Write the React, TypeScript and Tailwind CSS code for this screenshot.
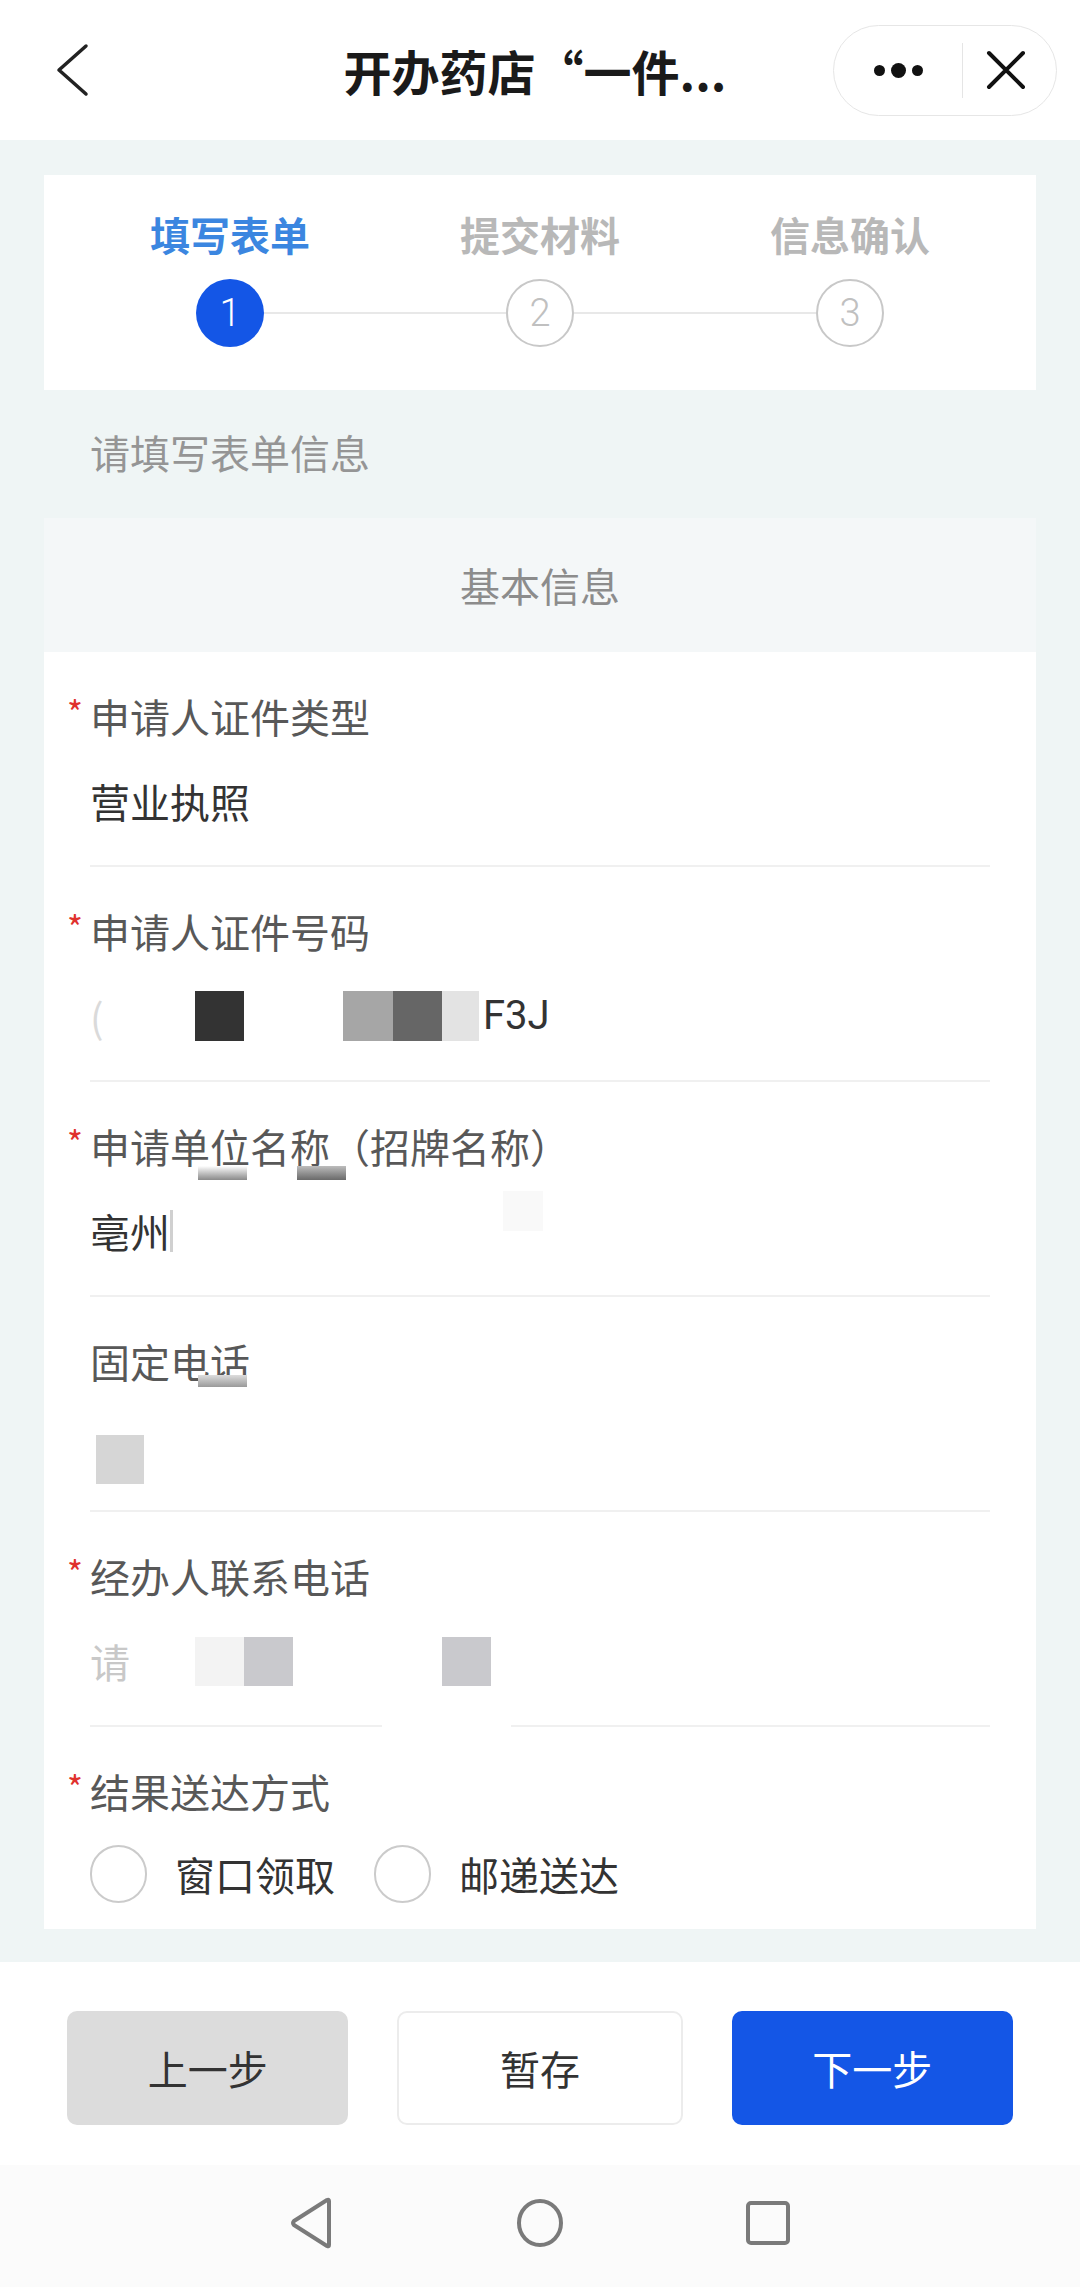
import type { ReactNode } from "react";

const Label = ({ required, text }: { required?: boolean; text: string }) => (
  <div className="pt-[40px] flex items-center h-[88px] text-[40px] leading-[48px] text-[#585858]">
    {required && (
      <span className="-ml-[23px] w-[23px] text-[#e0312d] text-[34px] leading-[34px] -mt-[8px]">*</span>
    )}
    <span>{text}</span>
  </div>
);

const Field = ({
  required,
  label,
  children,
  gap,
  divider = "full",
}: {
  required?: boolean;
  label: string;
  children: ReactNode;
  gap?: ReactNode;
  divider?: "full" | "split";
}) => (
  <div className="flex flex-col">
    <Label required={required} text={label} />
    <div className="h-[37px]">{gap}</div>
    <div className="flex items-center h-[48px] text-[40px] leading-[48px] text-[#333333]">{children}</div>
    <div className="h-[40px]" />
    {divider === "full" && <div className="h-[2px] bg-[#f0f0f0]" />}
    {divider === "split" && (
      <div className="flex h-[2px]">
        <div className="w-[292px] bg-[#f0f0f0]" />
        <div className="w-[129px]" />
        <div className="flex-1 bg-[#f0f0f0]" />
      </div>
    )}
  </div>
);

const Step = ({ n, label, active, first, last }: { n: number; label: string; active?: boolean; first?: boolean; last?: boolean }) => (
  <div className="flex flex-col items-center">
    <div className={`h-[48px] text-[40px] leading-[48px] font-semibold ${active ? "text-[#3b86e0]" : "text-[#b8b8b8]"}`}>{label}</div>
    <div className="mt-[21px] flex items-center w-full">
      <div className={`flex-1 h-[2px] ${first ? "" : "bg-[#e8e8e8]"}`} />
      <div
        className={`w-[68px] h-[68px] rounded-full flex items-center justify-center font-['Roboto',sans-serif] font-light text-[38px] ${
          active ? "bg-[#1456e6] text-white" : "border-2 border-[#c8c8c8] text-[#c0c0c0]"
        }`}
      >
        {n}
      </div>
      <div className={`flex-1 h-[2px] ${last ? "" : "bg-[#e8e8e8]"}`} />
    </div>
  </div>
);

const Radio = ({ label }: { label: string }) => (
  <div className="flex items-center">
    <div className="w-[57px] h-[58px] rounded-full border-2 border-[#cbcbcb]" />
    <span className="ml-[28px] text-[40px] leading-[48px] text-[#333333]">{label}</span>
  </div>
);

export default function App() {
  return (
    <div className="w-[1080px] min-h-[2287px] bg-[#eff5f5] flex flex-col font-['Noto_Sans_CJK_SC','Noto_Sans',sans-serif]">
      {/* 顶部导航 */}
      <div className="h-[140px] bg-white grid grid-cols-[1fr_auto_1fr] items-center">
        <div className="pl-[52px] flex items-center">
          <svg width="40" height="56" viewBox="0 0 40 56" fill="none">
            <path d="M34 4 L7 28 L34 52" stroke="#222" strokeWidth="3.5" strokeLinecap="round" strokeLinejoin="round" />
          </svg>
        </div>
        <div className="text-[48px] leading-[56px] font-bold text-[#1a1a1a] -ml-[10px]">开办药店“一件...</div>
        <div className="flex justify-end pr-[23px]">
          <div className="w-[224px] h-[91px] rounded-full border border-[#e6e6e6] flex items-center">
            <div className="w-[128px] flex items-center justify-center gap-[6px]">
              <span className="w-[11px] h-[11px] rounded-full bg-[#111]" />
              <span className="w-[15px] h-[15px] rounded-full bg-[#111]" />
              <span className="w-[11px] h-[11px] rounded-full bg-[#111]" />
            </div>
            <div className="w-px h-[55px] bg-[#e5e5e5]" />
            <div className="flex-1 flex items-center justify-center pr-[8px]">
              <svg width="42" height="40" viewBox="0 0 42 40" fill="none">
                <path d="M4 3 L38 37 M38 3 L4 37" stroke="#111" strokeWidth="4" strokeLinecap="round" />
              </svg>
            </div>
          </div>
        </div>
      </div>

      {/* 步骤条 */}
      <div className="mx-[44px] mt-[35px] bg-white px-[31px] pt-[35px] pb-[43px] grid grid-cols-3">
        <Step n={1} label="填写表单" active first />
        <Step n={2} label="提交材料" />
        <Step n={3} label="信息确认" last />
      </div>

      <div className="mt-[38px] px-[90px] text-[40px] leading-[48px] text-[#959595]">请填写表单信息</div>

      <div className="mx-[44px] mt-[42px] h-[134px] bg-[#f4f7f8] flex items-center justify-center text-[40px] text-[#8c8c8c]">
        基本信息
      </div>

      {/* 表单 */}
      <div className="mx-[44px] bg-white px-[46px] pb-[26px]">
        <Field required label="申请人证件类型">
          <span>营业执照</span>
        </Field>
        <Field required label="申请人证件号码">
          <span className="w-[14px] text-[#dadada]">(</span>
          <span className="ml-[91px] w-[49px] h-[50px] bg-[#333333]" />
          <span className="ml-[99px] w-[50px] h-[50px] bg-[#a6a6a6]" />
          <span className="w-[49px] h-[50px] bg-[#666666]" />
          <span className="w-[37px] h-[50px] bg-[#e3e3e3]" />
          <span className="ml-[4px] font-['Roboto',sans-serif]">F3J</span>
        </Field>
        <Field
          required
          label="申请单位名称（招牌名称）"
          gap={
            <div className="flex -mt-[4px]">
              <span className="ml-[108px] w-[49px] h-[14px] bg-gradient-to-b from-white to-[#8a8a8a]" />
              <span className="ml-[50px] w-[49px] h-[14px] bg-gradient-to-b from-[#bdbdbd] to-[#6a6a6a]" />
            </div>
          }
        >
          <span>亳州</span>
          <span className="w-[3px] h-[42px] bg-[#d0d0d0]" />
          <span className="ml-[330px] w-[40px] h-[40px] -mt-[40px] bg-[#f9f9f9]" />
        </Field>
        <Field
          label="固定电话"
          gap={
            <div className="flex -mt-[10px]">
              <span className="ml-[108px] w-[49px] h-[12px] bg-gradient-to-b from-[#dddddd] to-[#9a9a9a]" />
            </div>
          }
        >
          <span className="ml-[6px] w-[48px] h-[49px] bg-[#d6d6d6] translate-y-[13px]" />
        </Field>
        <Field required label="经办人联系电话" divider="split">
          <span className="w-[34px] text-[#c8c8c8]">请</span>
          <span className="ml-[71px] w-[49px] h-[49px] bg-[#f3f3f3]" />
          <span className="w-[49px] h-[49px] bg-[#c9c9cd]" />
          <span className="ml-[149px] w-[49px] h-[49px] bg-[#c9c9cd]" />
        </Field>
        <div className="flex flex-col">
          <Label required text="结果送达方式" />
          <div className="mt-[30px] flex items-center gap-[39px]">
            <Radio label="窗口领取" />
            <Radio label="邮递送达" />
          </div>
        </div>
      </div>

      {/* 底部按钮 */}
      <div className="mt-[33px] bg-white pt-[49px] pb-[40px] px-[67px] flex gap-[49px]">
        <div className="flex-1 h-[114px] rounded-[10px] bg-[#dcdcdc] flex items-center justify-center text-[40px] text-[#333333]">上一步</div>
        <div className="flex-1 h-[114px] rounded-[10px] bg-white border-2 border-[#ececec] flex items-center justify-center text-[40px] text-[#333333]">暂存</div>
        <div className="flex-1 h-[114px] rounded-[10px] bg-[#1456e6] flex items-center justify-center text-[40px] text-white">下一步</div>
      </div>

      {/* 系统导航 */}
      <div className="flex-1 bg-[#fbfbfb] flex items-center justify-center gap-[180px] pb-[6px]">
        <svg width="46" height="52" viewBox="0 0 46 52" fill="none">
          <path d="M40 4 L40 48 Q40 50 38 49 L5 28 Q3 26 5 24 L38 3 Q40 2 40 4 Z" stroke="#7a7a7a" strokeWidth="4" strokeLinejoin="round" />
        </svg>
        <svg width="50" height="50" viewBox="0 0 50 50" fill="none">
          <ellipse cx="25" cy="25" rx="21" ry="22" stroke="#7a7a7a" strokeWidth="4" />
        </svg>
        <svg width="46" height="46" viewBox="0 0 46 46" fill="none">
          <rect x="3" y="3" width="40" height="40" rx="3" stroke="#7a7a7a" strokeWidth="4" />
        </svg>
      </div>
    </div>
  );
}
